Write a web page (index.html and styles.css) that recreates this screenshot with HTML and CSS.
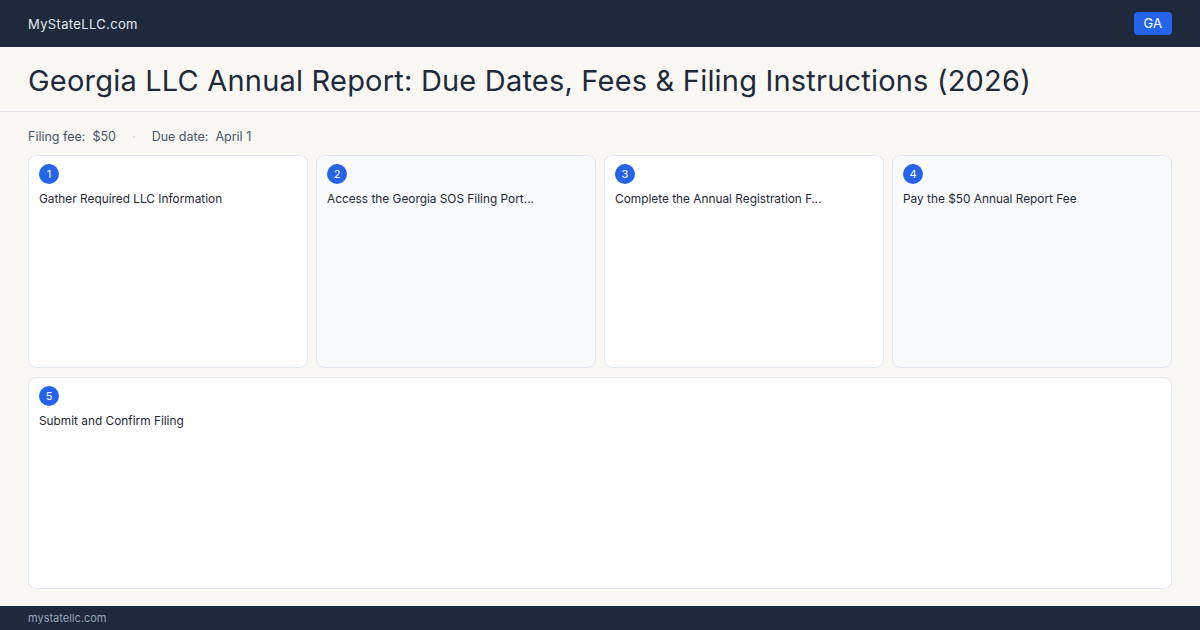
FILE: index.html
```html
<!doctype html>
<html>
  <head>
    <meta charset="UTF-8" />
    <title>Georgia LLC Annual Report</title>
    <link rel="stylesheet" href="styles.css">
  </head>
  <body>
    <div id="top">
      <span class="brand">MyStateLLC.com</span>
      <span class="state">GA</span>
    </div>
    <div id="title">
      <h1>Georgia LLC Annual Report: Due Dates, Fees &amp; Filing Instructions (2026)</h1>
    </div>
    <div id="main">
      <div class="meta">
        <span>Filing fee:&nbsp; $50</span>
        <span class="sep">·</span>
        <span>Due date:&nbsp; April 1</span>
      </div>
      <div id="steps">
        <div class="step">
          <span class="num">1</span>
          <p>Gather Required LLC Information</p>
        </div>
        <div class="step alt">
          <span class="num">2</span>
          <p>Access the Georgia SOS Filing Port…</p>
        </div>
        <div class="step">
          <span class="num">3</span>
          <p>Complete the Annual Registration F…</p>
        </div>
        <div class="step alt">
          <span class="num">4</span>
          <p>Pay the $50 Annual Report Fee</p>
        </div>
        <div class="step wide">
          <span class="num">5</span>
          <p>Submit and Confirm Filing</p>
        </div>
      </div>
    </div>
    <div id="foot">mystatellc.com</div>
  </body>
</html>
```

FILE: styles.css
```css
* {
  padding: 0px;
  margin: 0px;
  box-sizing: border-box;
}
body {
  width: 1200px;
  height: 630px;
  display: flex;
  flex-direction: column;
  background-color: #faf8f5;
  font-family: Inter, "Liberation Sans", sans-serif;
  color: #1e293b;
}
#top {
  height: 47px;
  background-color: #1e293b;
  display: flex;
  align-items: center;
  justify-content: space-between;
  padding: 0 28px;
}
.brand {
  color: #e2e8f0;
  font-size: 13px;
  letter-spacing: 0.35px;
}
.state {
  background-color: #2563eb;
  color: #fff;
  font-size: 13px;
  border-radius: 4px;
  padding: 4px 10px;
  line-height: 15px;
}
#title {
  height: 65px;
  display: flex;
  align-items: center;
  padding: 3px 28px 0;
  border-bottom: 1px solid #e5e7eb;
}
#title h1 {
  font-size: 29px;
  font-weight: 400;
  letter-spacing: 0.2px;
  color: #1e293b;
}
#main {
  flex: 1;
  padding: 16px 28px 17px;
  display: flex;
  flex-direction: column;
}
.meta {
  display: flex;
  gap: 16px;
  font-size: 12.5px;
  color: #475569;
  height: 27px;
  padding-top: 1px;
}
.meta .sep {
  color: #cbd5e1;
}
#steps {
  flex: 1;
  display: grid;
  grid-template-columns: repeat(4, 1fr);
  grid-template-rows: 1fr 1fr;
  gap: 9px 8px;
}
.step {
  background-color: #fff;
  border: 1px solid #e2e8f0;
  border-radius: 8px;
  padding: 8px 10px;
}
.step.alt {
  background-color: #f8fafc;
}
.step.wide {
  grid-column: 1 / 5;
}
.num {
  display: flex;
  align-items: center;
  justify-content: center;
  width: 20px;
  height: 20px;
  border-radius: 50%;
  background-color: #2563eb;
  color: #fff;
  font-size: 11px;
}
.step p {
  margin-top: 8px;
  font-size: 11.85px;
  color: #1f2937;
}
#foot {
  height: 24px;
  background-color: #1e293b;
  color: #94a3b8;
  font-size: 11px;
  display: flex;
  align-items: center;
  padding: 0 28px;
}
```
